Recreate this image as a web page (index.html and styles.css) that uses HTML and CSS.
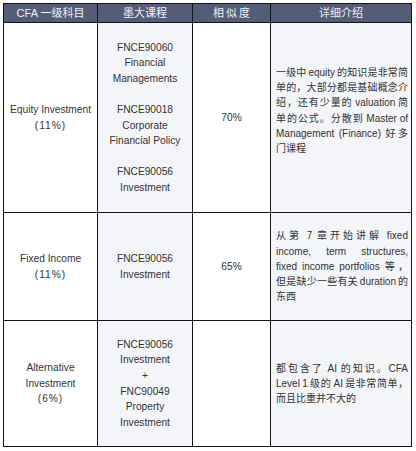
FILE: index.html
```html
<!DOCTYPE html>
<html lang="zh">
<head>
<meta charset="utf-8">
<title>CFA 一级科目 对比</title>
<link rel="stylesheet" href="styles.css">
</head>
<body>
<table class="grid">
  <colgroup>
    <col class="c1"><col class="c2"><col class="c3"><col class="c4">
  </colgroup>
  <thead>
    <tr class="head">
      <th>CFA 一级科目</th>
      <th>墨大课程</th>
      <th class="wide">相似度</th>
      <th>详细介绍</th>
    </tr>
  </thead>
  <tbody>
    <tr class="r1">
      <td class="subj">Equity Investment<br><span class="pct">(11%)</span></td>
      <td class="course">FNCE90060<br>Financial<br>Managements<br><br>FNCE90018<br>Corporate<br>Financial Policy<br><br>FNCE90056<br>Investment</td>
      <td class="sim">70%</td>
      <td class="desc raised">
        <span class="ln">一级中 equity 的知识是非常简</span>
        <span class="ln">单的，大部分都是基础概念介</span>
        <span class="ln">绍，还有少量的 valuation 简</span>
        <span class="ln">单的公式。分散到 Master of</span>
        <span class="ln">Management (Finance) 好多</span>
        <span class="ln last">门课程</span>
      </td>
    </tr>
    <tr class="r2">
      <td class="subj">Fixed Income<br><span class="pct">(11%)</span></td>
      <td class="course">FNCE90056<br>Investment</td>
      <td class="sim">65%</td>
      <td class="desc">
        <span class="ln">从第 7 章开始讲解 fixed</span>
        <span class="ln">income, term structures,</span>
        <span class="ln">fixed income portfolios 等，</span>
        <span class="ln">但是缺少一些有关 duration 的</span>
        <span class="ln last">东西</span>
      </td>
    </tr>
    <tr class="r3">
      <td class="subj">Alternative<br>Investment<br><span class="pct">(6%)</span></td>
      <td class="course">FNCE90056<br>Investment<br>+<br>FNC90049<br>Property<br>Investment</td>
      <td class="sim"></td>
      <td class="desc">
        <span class="ln">都包含了 AI 的知识。CFA</span>
        <span class="ln">Level 1 级的 AI 是非常简单，</span>
        <span class="ln last">而且比重并不大的</span>
      </td>
    </tr>
  </tbody>
</table>
</body>
</html>
```
FILE: styles.css
```css
html, body {
  margin: 0;
  padding: 0;
  background: #ffffff;
}

body {
  padding: 3px 0 0 3px;
  font-family: "Liberation Sans", "Noto Sans CJK SC", sans-serif;
  color: #333333;
}

.grid {
  border-collapse: collapse;
  table-layout: fixed;
  width: 408px;
  border: 1px solid #111111;
}

.c1 { width: 94px; }
.c2 { width: 95px; }
.c3 { width: 78px; }
.c4 { width: 141px; }

.grid th,
.grid td {
  border: 1px solid #151515;
  padding: 0;
}

.head {
  height: 19px;
}

.grid .head th {
  background: #545c78;
  color: #f0f2f6;
  font-weight: normal;
  font-size: 11px;
  line-height: 18px;
  text-align: center;
  vertical-align: middle;
}

.grid .head th.wide {
  letter-spacing: 2px;
  padding-left: 2px;
}

.r1 { height: 190px; }
.r2 { height: 108px; }
.r3 { height: 126px; }

.grid td {
  font-size: 10.2px;
  line-height: 15.6px;
  vertical-align: middle;
  text-align: center;
}

.pct {
  letter-spacing: 1px;
}

.grid td.course,
.grid td.desc {
  background: #f4f5f9;
}

.grid td.desc {
  font-size: 10px;
  line-height: 15.2px;
  text-align: justify;
  padding: 0 3px 0 5px;
}

.grid td.desc.raised {
  padding-bottom: 14px;
}

.ln {
  display: block;
  word-spacing: -1px;
  text-align: justify;
  text-align-last: justify;
}

.ln.last {
  text-align-last: left;
}
```
